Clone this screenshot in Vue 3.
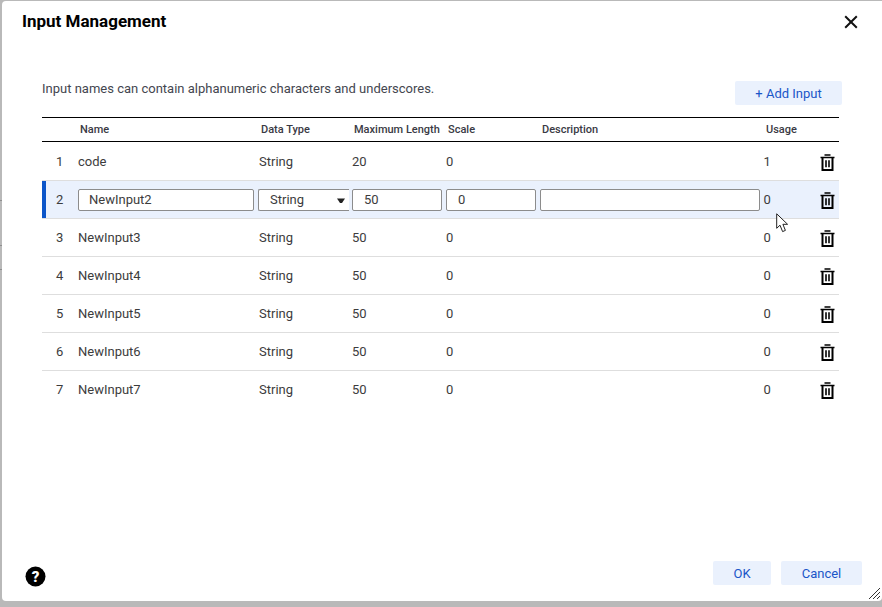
<script setup>
const rows = [
  { n: 1, name: 'code', type: 'String', len: '20', scale: '0', usage: '1' },
  { n: 2, name: 'NewInput2', type: 'String', len: '50', scale: '0', usage: '0', edit: true },
  { n: 3, name: 'NewInput3', type: 'String', len: '50', scale: '0', usage: '0' },
  { n: 4, name: 'NewInput4', type: 'String', len: '50', scale: '0', usage: '0' },
  { n: 5, name: 'NewInput5', type: 'String', len: '50', scale: '0', usage: '0' },
  { n: 6, name: 'NewInput6', type: 'String', len: '50', scale: '0', usage: '0' },
  { n: 7, name: 'NewInput7', type: 'String', len: '50', scale: '0', usage: '0' },
]
</script>

<template>
  <div class="backdrop">
    <div class="edge">
      <i class="tick t1"></i><i class="tick t2"></i><i class="tick t3"></i>
    </div>
    <section class="dialog">
      <header class="head">
        <h1>Input Management</h1>
        <button class="close" aria-label="Close">
          <svg width="14" height="14" viewBox="0 0 14 14"><path d="M1.2 1.2 12.8 12.8M12.8 1.2 1.2 12.8" stroke="#111" stroke-width="2" fill="none"/></svg>
        </button>
      </header>

      <div class="intro">
        <p>Input names can contain alphanumeric characters and underscores.</p>
        <button class="btn add">+ Add Input</button>
      </div>

      <div class="table">
        <div class="row hdr">
          <span></span>
          <span class="pad">Name</span>
          <span class="pad dt">Data Type</span>
          <span class="pad">Maximum Length</span>
          <span class="pad">Scale</span>
          <span class="pad">Description</span>
          <span class="pad">Usage</span>
          <span></span>
        </div>
        <div v-for="r in rows" :key="r.n" class="row body" :class="{ editing: r.edit }">
          <span class="num">{{ r.n }}</span>
          <template v-if="r.edit">
            <span><span class="field w-name">{{ r.name }}</span></span>
            <span>
              <span class="field w-type">{{ r.type }}<svg class="caret" width="8" height="6" viewBox="0 0 8 6"><path d="M0 .5h8L5 5H3z" fill="#222"/></svg></span>
            </span>
            <span><span class="field w-num">{{ r.len }}</span></span>
            <span><span class="field w-num">{{ r.scale }}</span></span>
            <span><span class="field w-desc"></span></span>
          </template>
          <template v-else>
            <span>{{ r.name }}</span>
            <span class="ty">{{ r.type }}</span>
            <span>{{ r.len }}</span>
            <span>{{ r.scale }}</span>
            <span></span>
          </template>
          <span class="use">{{ r.usage }}</span>
          <span class="del">
            <svg width="15" height="17" viewBox="0 0 15 17">
              <path d="M4.5 1h6M0.5 3.5h14" stroke="#000" stroke-width="1.6" fill="none"/>
              <path d="M2.5 3.5V15.9h10V3.5" stroke="#000" stroke-width="2" fill="none"/>
              <path d="M6 6.2v7M9 6.2v7" stroke="#000" stroke-width="1.6" fill="none"/>
            </svg>
          </span>
        </div>
      </div>

      <footer class="foot">
        <svg class="help" width="21" height="21" viewBox="0 0 21 21">
          <circle cx="10.5" cy="10.5" r="10" fill="#000"/>
          <text x="10.5" y="15.6" text-anchor="middle" class="qmark">?</text>
        </svg>
        <div class="actions">
          <button class="btn ok">OK</button>
          <button class="btn cancel">Cancel</button>
        </div>
      </footer>

      <svg class="grip" width="13" height="13" viewBox="0 0 13 13">
        <path d="M1 12 12 1M5 12l7-7M9 12l3-3" stroke="#333" stroke-width="1" fill="none"/>
      </svg>
      <svg class="cursor" width="14" height="20" viewBox="0 0 14 20">
        <path d="M.7.8V15.3L4 12.2 6.6 18.6 9.4 17.4 6.9 11.3H11.6Z" fill="#fff" stroke="#222" stroke-width="1"/>
      </svg>
    </section>
  </div>
</template>

<style scoped>
.backdrop {
  position: relative;
  box-sizing: border-box;
  width: 882px;
  height: 607px;
  padding: 1px 0 6px 2px;
  background: #b9b9b9;
  overflow: hidden;
  font-family: Roboto, "Liberation Sans", sans-serif;
  color: #3c3c3c;
}
.edge { position: absolute; left: 0; top: 0; width: 2px; height: 100%; }
.tick { position: absolute; left: 0; width: 2px; height: 1px; background: #8f8f8f; }
.t1 { top: 200px; }
.t2 { top: 245px; }
.t3 { top: 269px; }
.dialog {
  position: relative;
  box-sizing: border-box;
  height: 600px;
  padding: 0 20px 0 20px;
  background: #fff;
  border-radius: 4px 0 4px 4px;
  display: flex;
  flex-direction: column;
}
.head {
  display: flex;
  justify-content: space-between;
  align-items: center;
  height: 40px;
}
h1 {
  margin: 0;
  font-size: 17px;
  font-weight: 700;
  color: #000;
  line-height: 41px;
}
.close {
  display: flex;
  border: 0;
  background: none;
  padding: 0;
  margin-right: 4px;
  margin-top: 2px;
}
.intro {
  display: flex;
  justify-content: space-between;
  align-items: flex-start;
  margin: 40px 0 0 20px;
  height: 36px;
}
.intro p {
  margin: 0;
  font-size: 13px;
  line-height: 16px;
  color: #44464f;
}
.btn {
  border: 0;
  border-radius: 2px;
  background: #eaf1fd;
  color: #1a56c8;
  font: 400 13px Roboto, "Liberation Sans", sans-serif;
  padding: 0;
  height: 24px;
}
.add { width: 107px; margin-right: 20px; }
.table { margin-left: 20px; width: 797px; }
.row {
  display: grid;
  grid-template-columns: 36px 180px 94px 94px 94px 224px 56px 19px;
  align-items: center;
  font-size: 13px;
}
.hdr {
  box-sizing: border-box;
  height: 25px;
  margin-bottom: 1px;
  border-top: 1px solid #000;
  border-bottom: 1px solid #000;
  font-size: 11px;
  font-weight: 500;
  color: #3a3a44;
}
.pad { padding-left: 2px; }
.dt { padding-left: 3px; }
.ty { padding-left: 1px; }
.use { margin-left: -0.6px; }
.body {
  box-sizing: border-box;
  height: 38px;
  border-bottom: 1px solid #dedede;
}
.body:last-child { border-bottom-color: transparent; }
.num { padding-left: 14px; }
.editing {
  background: #eaf1fd;
  box-shadow: inset 4px 0 0 #0b55c9;
}
.field {
  box-sizing: border-box;
  display: block;
  height: 22px;
  padding-left: 10px;
  line-height: 20px;
  background: #fff;
  border: 1px solid #8c8c8c;
  border-radius: 2px;
  position: relative;
}
.w-name { width: 176px; }
.w-type { width: 91px; padding-left: 11px; border-right: 0; border-radius: 2px 0 0 2px; }
.w-num { width: 90px; padding-left: 11px; }
.w-desc { width: 220px; }
.caret { position: absolute; right: 4px; top: 8px; }
.del { display: flex; justify-content: flex-end; padding: 2px 4px 0 0; margin-left: -8px; }
.foot {
  margin-top: auto;
  display: flex;
  justify-content: space-between;
  align-items: center;
  height: 24px;
  margin-bottom: 16px;
}
.help { margin-left: 3px; margin-top: 6px; }
.qmark { font: 900 15px Roboto, sans-serif; fill: #fff; }
.actions { display: flex; gap: 10px; }
.ok { width: 58px; }
.cancel { width: 81px; }
.grip { position: absolute; right: 1px; bottom: 1px; }
.cursor { position: absolute; left: 774px; top: 212px; }
</style>
